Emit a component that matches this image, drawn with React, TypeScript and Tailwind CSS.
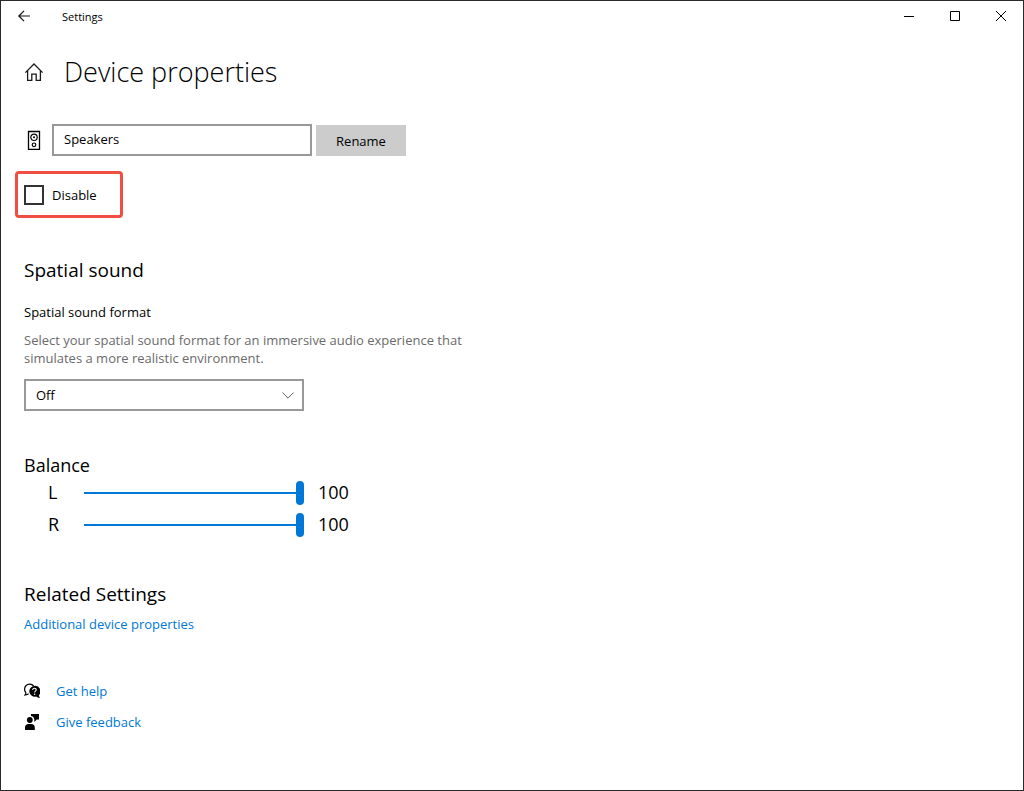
import { useState } from "react";
import type { ReactNode } from "react";

function BackIcon() {
  return (
    <svg className="h-3 w-3.5" viewBox="0 0 14 12" fill="none" stroke="#111" strokeWidth="1.2" aria-hidden="true">
      <path d="M7 .8 1.800 6 7 11.200M2 6h11" />
    </svg>
  );
}

function HomeIcon() {
  return (
    <svg className="h-5 w-5" viewBox="0 0 20 20" fill="none" stroke="#1a1a1a" strokeWidth="1.3" aria-hidden="true">
      <path d="M1.400 10.600 10 2l8.600 8.600" />
      <path d="M3.600 8.600v9.800h4.200v-6.200h4.400v6.200h4.200V8.600" />
    </svg>
  );
}

function SpeakerIcon() {
  return (
    <svg className="h-5 w-5" viewBox="0 0 20 20" fill="none" stroke="#000" strokeWidth="1.2" aria-hidden="true">
      <path d="M4.500 1.500h11v18h-11z" strokeWidth="1.300" />
      <circle cx="10" cy="7.300" r="3.200" />
      <circle cx="10" cy="7.300" r="1" fill="#000" stroke="none" />
      <circle cx="10" cy="14.800" r="1.800" />
    </svg>
  );
}

function HelpIcon() {
  return (
    <svg className="h-4 w-4" viewBox="0 0 16 16" aria-hidden="true">
      <path
        d="M4.6 10.7c-.9.5-1.9 1.2-3.5 1.3.6-.7.8-1.6.7-2.4A5 5 0 0 1 .6 6.100 5 5 0 0 1 5.700 1.100c1.700 0 3.100.7 4 2"
        fill="none"
        stroke="#000"
        strokeWidth="1.2"
      />
      <path d="M10.300 2.900a5.400 5.400 0 1 0 1.800 10.600c1.200.8 2.400 1.400 3.900 1.500-.8-.9-1.100-2-1-3A5.400 5.400 0 0 0 10.300 2.900z" fill="#000" />
      <path d="M8.700 6.900c0-2.300 3.700-2.100 3.500.1-.1 1.200-1.600 1.200-1.600 2.600" fill="none" stroke="#fff" strokeWidth="1.100" />
      <circle cx="10.600" cy="11.300" r=".8" fill="#fff" />
    </svg>
  );
}

function FeedbackIcon() {
  return (
    <svg className="h-4 w-4" viewBox="0 0 16 16" fill="#000" aria-hidden="true">
      <path d="M7 0h8v5.500h-2.200L10.300 8V5.300C9.900 3.400 8.900 2.400 7 2.100z" />
      <circle cx="5.800" cy="6" r="2.900" />
      <path d="M1 16v-2.500C1 11.200 2.500 10 4.500 10h2.800c2 0 3.500 1.200 3.500 3.500V16z" />
    </svg>
  );
}

function CaptionButton({ label, children }: { label: string; children: ReactNode }) {
  return (
    <button type="button" aria-label={label} className="flex w-[46px] items-center justify-center pl-0.5">
      <svg
        className="h-2.5 w-2.5 overflow-visible"
        viewBox="0 0 10 10"
        fill="none"
        stroke="#000"
        aria-hidden="true"
      >
        {children}
      </svg>
    </button>
  );
}

function BalanceRow({ channel }: { channel: string }) {
  const [value, setValue] = useState(100);
  const id = `balance-${channel}`;
  return (
    <div className="flex h-8 items-center text-lg leading-6">
      <label htmlFor={id} className="w-[60px] pb-0.5 pl-6">
        {channel}
      </label>
      <input
        id={id}
        type="range"
        min={0}
        max={100}
        value={value}
        onChange={(e) => setValue(Number(e.target.value))}
        className="h-6 w-[220px] appearance-none bg-transparent [&::-webkit-slider-runnable-track]:h-0.5 [&::-webkit-slider-runnable-track]:bg-[#0078d7] [&::-webkit-slider-thumb]:-mt-[11px] [&::-webkit-slider-thumb]:h-6 [&::-webkit-slider-thumb]:w-2 [&::-webkit-slider-thumb]:appearance-none [&::-webkit-slider-thumb]:rounded-full [&::-webkit-slider-thumb]:bg-[#0078d7]"
      />
      <output htmlFor={id} className="pb-0.5 pl-3.5">
        {value}
      </output>
    </div>
  );
}

export default function App() {
  return (
    <div className="flex min-h-screen flex-col border border-[#2b2929] bg-white font-['Open_Sans','Noto_Sans',sans-serif] text-[13px] leading-5 text-black">
      <header className="flex h-8 items-start justify-between">
        <div className="flex">
          <button type="button" aria-label="Back" className="flex h-[30px] w-[46px] items-center justify-center">
            <BackIcon />
          </button>
          <span className="pl-[15px] text-[11px] leading-8">Settings</span>
        </div>
        <div className="flex h-[30px]">
          <CaptionButton label="Minimize">
            <path d="M0 5.500h10" />
          </CaptionButton>
          <CaptionButton label="Maximize">
            <path d="M.5 .5h9v9h-9z" />
          </CaptionButton>
          <CaptionButton label="Close">
            <path d="M0 0l10 10M10 0 0 10" />
          </CaptionButton>
        </div>
      </header>

      <main className="px-[23px] pb-8 pt-[19px]">
        <div className="flex items-center gap-5">
          <HomeIcon />
          <h1 className="text-[27px] font-light leading-10">Device properties</h1>
        </div>

        <form className="mt-8 flex items-center" onSubmit={(e) => e.preventDefault()}>
          <SpeakerIcon />
          <input
            aria-label="Device name"
            defaultValue="Speakers"
            className="ml-2 h-8 w-[260px] border-2 border-[#999] px-2.5 pb-0.5 outline-none"
          />
          <button type="submit" className="ml-1 mt-px h-[31px] w-[90px] bg-[#ccc]">
            Rename
          </button>
        </form>

        <label className="-ml-[9px] mt-[15px] flex h-[47px] w-[108px] items-center gap-2 rounded-sm border-3 border-[#f04e43] pl-1.5">
          <input type="checkbox" className="h-5 w-5 appearance-none border-2 border-[#333] checked:bg-[#0078d7]" />
          Disable
        </label>

        <section className="mt-10">
          <h2 className="text-[19px] leading-6">Spatial sound</h2>
          <label htmlFor="format" className="mt-5 block">
            Spatial sound format
          </label>
          <p className="mt-[9px] max-w-[460px] leading-[18px] text-[#6b6b6b]">
            Select your spatial sound format for an immersive audio experience that simulates a more realistic
            environment.
          </p>
          <div className="mt-3 grid w-[280px] items-center">
            <select
              id="format"
              className="col-start-1 row-start-1 h-8 appearance-none border-2 border-[#999] bg-white px-2.5 outline-none"
            >
              <option>Off</option>
            </select>
            <svg
              className="pointer-events-none col-start-1 row-start-1 mr-2.5 h-[7px] w-3 justify-self-end"
              viewBox="0 0 12 7"
              fill="none"
              stroke="#666"
              aria-hidden="true"
            >
              <path d="M.4 .5 6 6.100 11.600 .5" />
            </svg>
          </div>
        </section>

        <section className="mt-[42px]">
          <h2 className="text-lg leading-6">Balance</h2>
          <BalanceRow channel="L" />
          <BalanceRow channel="R" />
        </section>

        <section className="mt-[41px]">
          <h2 className="text-[19px] leading-6">Related Settings</h2>
          <a href="#properties" className="mt-2 block w-fit text-[#0078d7]">
            Additional device properties
          </a>
        </section>

        <nav className="mt-[47px] flex flex-col items-start gap-[11px] text-[#0078d7]">
          <a href="#help" className="flex items-center gap-4">
            <HelpIcon />
            Get help
          </a>
          <a href="#feedback" className="flex items-center gap-4">
            <FeedbackIcon />
            Give feedback
          </a>
        </nav>
      </main>
    </div>
  );
}
